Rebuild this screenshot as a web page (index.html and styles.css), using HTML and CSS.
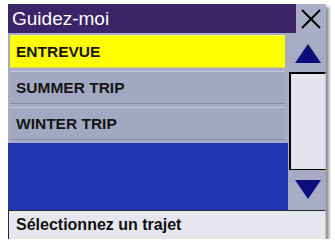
FILE: index.html
```html
<!DOCTYPE html>
<html lang="fr">
<head>
<meta charset="utf-8">
<link rel="stylesheet" href="styles.css">
</head>
<body>
<div class="device">
  <div class="titlebar">
    <div class="title">Guidez-moi</div>
    <div class="close">
      <svg width="20" height="20" viewBox="0 0 20 20"><path d="M1 1 L19 19 M19 1 L1 19" stroke="#000" stroke-width="2" fill="none"/></svg>
    </div>
  </div>
  <div class="main">
    <div class="list">
      <div class="row selected">ENTREVUE</div>
      <div class="row">SUMMER TRIP</div>
      <div class="row">WINTER TRIP</div>
      <div class="empty"></div>
    </div>
    <div class="scroll">
      <div class="btn up">
        <svg width="26" height="19" viewBox="0 0 26 19"><polygon points="13,0 26,19 0,19" fill="#0c0c7c"/></svg>
      </div>
      <div class="track"></div>
      <div class="btn down">
        <svg width="26" height="19" viewBox="0 0 26 19"><polygon points="0,0 26,0 13,19" fill="#0c0c7c"/></svg>
      </div>
    </div>
  </div>
  <div class="status">Sélectionnez un trajet</div>
</div>
</body>
</html>
```
FILE: styles.css
```css
html, body {
  margin: 0;
  padding: 0;
  background: #ffffff;
}
body {
  padding: 4px 0 0 8px;
  font-family: "Liberation Sans", Arial, sans-serif;
}
.device {
  width: 318px;
  height: 235px;
  display: flex;
  flex-direction: column;
  background: #a7acc4;
  box-shadow: 3px 3px 3px #8c8c8c;
}
.titlebar {
  display: flex;
  height: 29px;
}
.title {
  flex: 1;
  background: #3b2467;
  color: #ffffff;
  font-size: 19px;
  line-height: 29px;
  padding-left: 4px;
}
.close {
  width: 30px;
  background: #a9aec6;
  display: flex;
  align-items: center;
  justify-content: center;
}
.main {
  display: flex;
  height: 177px;
}
.list {
  width: 280px;
  display: flex;
  flex-direction: column;
  gap: 3px;
  padding-top: 2px;
  background: #a7acc4;
}
.row {
  height: 31px;
  margin: 0 3px 0 2px;
  background: #a3a8c2;
  border-top: 1px solid #c3c7da;
  border-bottom: 1px solid #878ca6;
  color: #141414;
  font-weight: bold;
  font-size: 15.5px;
  line-height: 31px;
  padding-left: 6px;
}
.row.selected {
  background: #ffff00;
  border-top-color: #ffff66;
  border-bottom-color: #d8d860;
}
.empty {
  flex: 1;
  background: #1e35b0;
}
.scroll {
  width: 38px;
  display: flex;
  flex-direction: column;
  padding-top: 2px;
  padding-bottom: 2px;
}
.btn {
  height: 37px;
  margin-left: 1px;
  display: flex;
  align-items: center;
  justify-content: center;
}
.btn.down {
  height: 38px;
}
.track {
  flex: 1;
  margin-left: 1px;
  background: #e4e4ed;
  border-top: 2px solid #000000;
  border-left: 2px solid #000000;
  border-right: 1px solid #c8c8d4;
  border-bottom: 1px solid #000000;
}
.status {
  height: 28px;
  background: #e6e6ee;
  border-top: 1px solid #2a2a2a;
  border-left: 1px solid #2a2a2a;
  border-right: 1px solid #c4c4cc;
  color: #111111;
  font-weight: bold;
  font-size: 16px;
  line-height: 28px;
  padding-left: 7px;
}
```
